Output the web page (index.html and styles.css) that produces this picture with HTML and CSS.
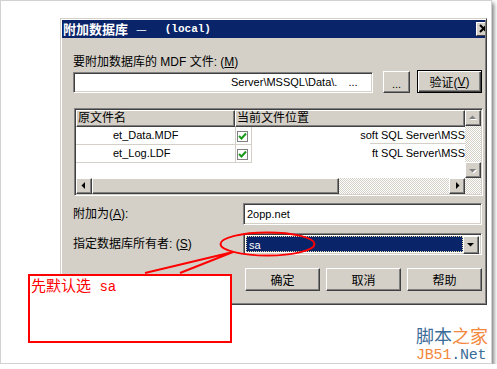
FILE: index.html
```html
<!DOCTYPE html>
<html lang="zh-CN">
<head>
    <meta charset="UTF-8">
    <title>附加数据库</title>
    <link rel="stylesheet" href="styles.css">
</head>
<body>
<div class="shot">
    <div class="dialog">
        <div class="titlebar">
            <span class="title-text">附加数据库</span>
            <span class="title-dash">—</span>
            <span class="title-host">(local)</span>
            <span class="close-btn">
                <svg width="14" height="12" viewBox="0 0 14 12"><path d="M3 2 L10 9 M10 2 L3 9" stroke="#000" stroke-width="2"/></svg>
            </span>
        </div>
        <div class="dialog-body">
            <div class="field-label">要附加数据库的 MDF 文件: (<u>M</u>)</div>
            <div class="file-row">
                <div class="sunken file-input"><span>Server\MSSQL\Data\.</span><span class="dots">...</span></div>
                <div class="btn browse-btn">...</div>
                <div class="btn btn-default verify-btn">验证(<u>V</u>)</div>
            </div>

            <div class="sunken file-grid">
                <div class="grid-main">
                    <div class="grid-head">
                        <div class="head-cell name-col">原文件名</div>
                        <div class="head-cell path-col">当前文件位置</div>
                    </div>
                    <div class="grid-row">
                        <div class="cell name-cell">et_Data.MDF</div>
                        <div class="cell check-cell">
                            <span class="check"><svg width="9" height="9" viewBox="0 0 9 9"><path d="M1 4 L3.5 6.5 L8 1.5" fill="none" stroke="#1a9a1a" stroke-width="2"/></svg></span>
                        </div>
                        <div class="cell path-cell">soft SQL Server\MSS</div>
                    </div>
                    <div class="grid-row">
                        <div class="cell name-cell">et_Log.LDF</div>
                        <div class="cell check-cell">
                            <span class="check"><svg width="9" height="9" viewBox="0 0 9 9"><path d="M1 4 L3.5 6.5 L8 1.5" fill="none" stroke="#1a9a1a" stroke-width="2"/></svg></span>
                        </div>
                        <div class="cell path-cell no-line">ft SQL Server\MSS</div>
                    </div>
                </div>
                <div class="vscroll">
                    <div class="btn sbtn">
                        <svg width="14" height="14" viewBox="0 0 14 14"><polygon points="4,9 7.5,5.5 11,9" fill="#fff"/><polygon points="3,8 6.5,4.5 10,8" fill="#808080"/></svg>
                    </div>
                    <div class="track"></div>
                    <div class="btn sbtn">
                        <svg width="14" height="14" viewBox="0 0 14 14"><polygon points="4,7 11,7 7.5,10.5" fill="#fff"/><polygon points="3,6 10,6 6.5,9.5" fill="#808080"/></svg>
                    </div>
                </div>
                <div class="hscroll">
                    <div class="btn sbtn">
                        <svg width="14" height="14" viewBox="0 0 14 14"><polygon points="8,3 8,10 4.5,6.5" fill="#000"/></svg>
                    </div>
                    <div class="btn thumb"></div>
                    <div class="track"></div>
                    <div class="btn sbtn">
                        <svg width="14" height="14" viewBox="0 0 14 14"><polygon points="6,3 6,10 9.5,6.5" fill="#000"/></svg>
                    </div>
                </div>
                <div class="track"></div>
            </div>

            <div class="form-row attach-row">
                <div class="row-label">附加为(<u>A</u>):</div>
                <div class="sunken text-input">2opp.net</div>
            </div>
            <div class="form-row owner-row">
                <div class="row-label">指定数据库所有者: (<u>S</u>)</div>
                <div class="sunken combo">
                    <div class="combo-value">sa</div>
                    <div class="btn combo-btn">
                        <svg width="14" height="14" viewBox="0 0 14 14"><polygon points="3,5 10,5 6.5,8.5" fill="#000"/></svg>
                    </div>
                </div>
            </div>

            <div class="button-row">
                <div class="btn dlg-btn">确定</div>
                <div class="btn dlg-btn">取消</div>
                <div class="btn dlg-btn">帮助</div>
            </div>
        </div>
    </div>

    <!-- annotation drawn over the screenshot -->
    <div class="note-box">先默认选<span class="note-mono"> sa</span></div>
    <svg class="marks" width="497" height="369" viewBox="0 0 497 369">
        <ellipse cx="267.5" cy="244" rx="47" ry="11.5" fill="none" stroke="#ff0000" stroke-width="2"/>
        <polyline points="145,273 233,252 180,273" fill="none" stroke="#ff0000" stroke-width="2"/>
    </svg>

    <div class="watermark wm-cn"><span class="wm-blue">脚本</span><span class="wm-orange">之家</span></div>
    <div class="watermark wm-en"><span class="wm-orange">JB51</span><span class="wm-blue">.Net</span></div>
</div>
</body>
</html>
```

FILE: styles.css
```css
body {
    margin: 0;
    background: #fff;
    font-family: "Liberation Sans", "Noto Sans CJK SC", sans-serif;
    font-size: 12px;
    color: #000;
}
.shot {
    position: relative;
    width: 492px;
    height: 364px;
    box-sizing: border-box;
    border: 1px solid #d2d2d2;
    box-shadow: 2px 3px 4px rgba(0, 0, 0, 0.5);
    padding: 17px 0 0 59px;
    background: #fff;
}

/* window */
.dialog {
    width: 427px;
    height: 287px;
    box-sizing: border-box;
    border: 1px solid;
    border-color: #d4d0c8 #404040 #404040 #d4d0c8;
    box-shadow: inset 1px 1px #fff, inset -1px -1px #808080;
    padding: 1px;
    background: #d4d0c8;
}
.titlebar {
    height: 18px;
    display: flex;
    align-items: center;
    overflow: hidden;
    padding-left: 1px;
    background: #0a246a;
    color: #fff;
    font-weight: bold;
}
.title-text {
    font-family: "Noto Sans CJK SC", sans-serif;
    font-size: 13px;
    line-height: 16px;
}
.title-dash {
    margin-left: 8px;
    font-family: "Noto Sans CJK SC", sans-serif;
    font-size: 12px;
    font-weight: normal;
    line-height: 16px;
}
.title-host {
    margin-left: 18px;
    font-family: "Liberation Mono", monospace;
    font-size: 11px;
}
.close-btn {
    margin-left: auto;
    margin-right: -7px;
    flex-shrink: 0;
    width: 16px;
    height: 14px;
    box-sizing: border-box;
    background: #d4d0c8;
    border: 1px solid;
    border-color: #fff #404040 #404040 #fff;
    display: flex;
}

.dialog-body {
    padding: 17px 3px 0 11px;
}
.field-label {
    height: 14px;
    line-height: 14px;
}

/* shared control looks */
.sunken {
    box-sizing: border-box;
    background: #fff;
    border: 1px solid;
    border-color: #808080 #fff #fff #808080;
    box-shadow: inset 1px 1px #404040, inset -1px -1px #d4d0c8;
}
.btn {
    box-sizing: border-box;
    background: #d4d0c8;
    border: 1px solid;
    border-color: #fff #404040 #404040 #fff;
    box-shadow: inset -1px -1px #808080;
    display: flex;
    align-items: center;
    justify-content: center;
}
.btn-default {
    border-color: #000;
    box-shadow: inset 1px 1px #fff, inset -1px -1px #404040, inset -2px -2px #808080;
}

.file-row {
    display: flex;
    align-items: flex-end;
    height: 23px;
    margin-top: 1px;
}
.file-input {
    width: 300px;
    height: 21px;
    padding-left: 157px;
    font-size: 11px;
    line-height: 19px;
    white-space: nowrap;
    overflow: hidden;
}
.dots {
    margin-left: 11px;
}
.browse-btn {
    margin-left: 10px;
    width: 27px;
    height: 22px;
    font-size: 11px;
    padding-top: 3px;
}
.verify-btn {
    margin-left: 7px;
    width: 65px;
    height: 23px;
}

/* file list */
.file-grid {
    margin: 15px 0 0 1px;
    width: 409px;
    height: 88px;
    padding: 1px;
    display: grid;
    grid-template-columns: 389px 16px;
    grid-template-rows: 68px 16px;
}
.grid-main {
    background: #fff;
    overflow: hidden;
}
.grid-head {
    display: flex;
    height: 17px;
}
.head-cell {
    box-sizing: border-box;
    height: 17px;
    line-height: 15px;
    padding-left: 1px;
    background: #d4d0c8;
    border: 1px solid;
    border-color: #fff #404040 #404040 #fff;
    box-shadow: inset -1px -1px #808080;
}
.name-col {
    width: 159px;
}
.path-col {
    width: 230px;
}
.grid-row {
    display: flex;
    height: 18px;
}
.cell {
    box-sizing: border-box;
    height: 18px;
    border-bottom: 1px solid #d4d0c8;
    font-size: 11px;
    line-height: 17px;
    white-space: nowrap;
    overflow: hidden;
}
.name-cell {
    width: 159px;
    padding-left: 37px;
}
.check-cell {
    width: 17px;
    border-left: 1px solid #d4d0c8;
    border-right: 1px solid #d4d0c8;
    padding: 4px 0 0 1px;
}
.check {
    display: flex;
    align-items: center;
    justify-content: center;
    width: 11px;
    height: 11px;
    box-sizing: border-box;
    border: 1px solid #808080;
    background: #fff;
}
.path-cell {
    width: 213px;
    text-align: right;
    border-bottom-color: transparent;
    background: linear-gradient(#d4d0c8, #d4d0c8) no-repeat right bottom / 95px 1px;
}
.path-cell.no-line {
    background: none;
}
.vscroll {
    display: flex;
    flex-direction: column;
}
.hscroll {
    display: flex;
}
.sbtn {
    width: 16px;
    height: 16px;
    flex-shrink: 0;
}
.thumb {
    width: 247px;
    height: 16px;
}
.track {
    flex: 1;
    background-image: conic-gradient(#d4d0c8 25%, #fff 0 50%, #d4d0c8 0 75%, #fff 0);
    background-size: 2px 2px;
}

/* lower form */
.form-row {
    display: flex;
    align-items: center;
    height: 22px;
}
.attach-row {
    margin-top: 7px;
}
.owner-row {
    margin-top: 8px;
}
.row-label {
    width: 170px;
    line-height: 14px;
}
.text-input {
    width: 239px;
    height: 22px;
    padding-left: 3px;
    font-size: 11px;
    line-height: 20px;
}
.combo {
    width: 239px;
    height: 22px;
    padding: 2px;
    display: flex;
}
.combo-value {
    flex: 1;
    box-sizing: border-box;
    background: #0a246a;
    border: 1px dotted #e8e0a8;
    color: #fff;
    font-size: 11px;
    line-height: 16px;
    padding-left: 2px;
}
.combo-btn {
    width: 16px;
    height: 18px;
}

.button-row {
    display: flex;
    justify-content: flex-end;
    gap: 6px;
    margin-top: 13px;
}
.dlg-btn {
    width: 75px;
    height: 23px;
}

/* annotation */
.note-box {
    position: absolute;
    left: 27px;
    top: 273px;
    width: 204px;
    height: 69px;
    box-sizing: border-box;
    border: 2px solid #ff0000;
    background: #fff;
    padding-left: 1px;
    color: #ff0000;
    font-family: "Noto Sans CJK SC", sans-serif;
    font-size: 15px;
    line-height: 17px;
}
.note-mono {
    font-family: "Liberation Mono", monospace;
    font-size: 14px;
}
.marks {
    position: absolute;
    left: -1px;
    top: -1px;
    pointer-events: none;
}

.watermark {
    position: absolute;
    left: 415px;
    white-space: nowrap;
}
.wm-cn {
    top: 324px;
    font-family: "Noto Sans CJK SC", sans-serif;
    font-size: 18px;
    line-height: 20px;
}
.wm-en {
    top: 347px;
    font-family: "Liberation Mono", monospace;
    font-size: 15px;
    letter-spacing: -0.2px;
    line-height: 15px;
}
.wm-blue {
    color: #3c6c98;
}
.wm-orange {
    color: #f4873c;
}
```
